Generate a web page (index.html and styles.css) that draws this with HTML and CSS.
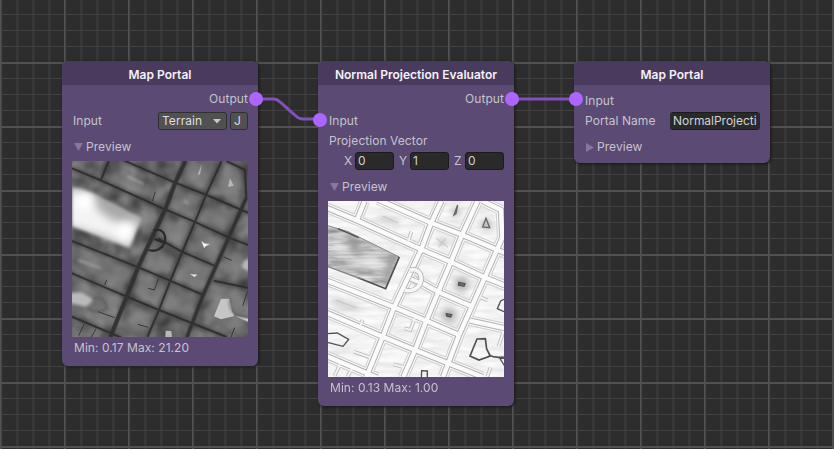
FILE: index.html
```html
<!DOCTYPE html>
<html lang="en">
<head>
<meta charset="utf-8">
<title>Graph</title>
<link rel="stylesheet" href="styles.css">
</head>
<body>
<main class="canvas">
  <svg class="wires" width="834" height="449">
    <path d="M256 99H274Q277 99 280 102L296 116Q299 119 303 119H320M512 99H576"/>
  </svg>

  <section class="node node-a">
    <h2 class="title">Map Portal</h2>
    <div class="row out">Output<i class="port port-out"></i></div>
    <div class="row field">
      <span class="grow">Input</span>
      <button class="select">Terrain<svg width="8" height="5"><path d="M0 0H8L4 4.6Z" fill="#c8c8c8"/></svg></button>
      <button class="jump">J</button>
    </div>
    <div class="fold"><svg width="9" height="8"><path d="M0 0H9L4.5 8Z" fill="#85789a"/></svg>Preview</div>
    <svg class="map" viewBox="0 0 528 528">
      <defs>
        <g id="roads" fill="none">
          <path id="avenue" d="M340 0L309 67L279 147L199 317L164 407L115 528"/>
          <path d="M449 0L404 97L367 187L329 277L294 362L259 452L226 528"/>
          <path d="M463 0L519 27L523 110L469 232L429 322L394 400L345 528"/>
          <path d="M-5 20L84 57L279 145L367 182L469 229L533 254"/>
          <path d="M150 -4L309 65L404 102L509 147L533 157"/>
          <path d="M-5 238L199 319L294 359L394 402"/>
          <path d="M-5 335L164 407L261 447L374 492L464 528"/>
          <path d="M-5 465L148 530"/>
          <path d="M258 232L329 272L434 317"/>
          <path d="M426 359L533 382"/>
          <path d="M110 0L86 59"/>
        </g>
        <g id="lanes" fill="none">
          <path d="M250 92L241 120M260 352L247 387L229 382M78 452L128 470M104 357L98 372M197 490L228 499M455 288L479 298M527 390L512 435M488 500L477 528M36 490L20 524M72 503L58 528"/>
        </g>
        <path id="loop" d="M245 208C270 200 282 219 279 240C274 263 250 274 230 267M248 234L276 245" fill="none"/>
        <filter id="b3"><feGaussianBlur stdDeviation="4"/></filter>
        <filter id="b1"><feGaussianBlur stdDeviation="1.7"/></filter>
        <filter id="b9" x="-.5" y="-.5" width="2" height="2"><feGaussianBlur stdDeviation="10"/></filter>
        <filter id="b14" x="-.5" y="-.5" width="2" height="2"><feGaussianBlur stdDeviation="13"/></filter>
        <filter id="cloud" x="0" y="0" width="1" height="1" color-interpolation-filters="sRGB"><feTurbulence type="fractalNoise" baseFrequency=".02" numOctaves="2" seed="4"/><feColorMatrix values="1 0 0 0 -.08  1 0 0 0 -.08  1 0 0 0 -.08  0 0 0 0 1"/></filter>
        <filter id="streak" x="0" y="0" width="1" height="1" color-interpolation-filters="sRGB"><feTurbulence type="fractalNoise" baseFrequency=".012 .06" numOctaves="3" seed="8"/><feColorMatrix values="1 0 0 0 .25  1 0 0 0 .25  1 0 0 0 .25  0 0 0 0 1"/></filter>
        <clipPath id="park"><path d="M0 74L60 92L214 168L173 263L0 197Z"/></clipPath>
      </defs>
      <rect width="528" height="528" fill="#646464"/>
      <rect width="528" height="528" filter="url(#cloud)" opacity=".4"/>
      <g filter="url(#b9)" fill="#858585" opacity=".6">
        <path d="M120 30L280 95L255 125L105 70ZM350 10L430 20L395 80L330 60ZM460 20L505 40L500 120L425 95ZM315 95L385 120L360 165L295 145ZM410 130L485 160L460 210L385 180ZM375 210L450 240L430 300L345 265ZM275 170L350 195L320 260L260 225ZM335 290L415 325L390 385L310 350ZM235 270L310 290L285 340L220 310ZM210 340L285 370L250 430L180 400ZM300 385L380 410L360 470L275 440ZM20 265L180 325L155 385L10 325ZM190 435L250 460L220 515L150 490ZM10 360L150 415L120 500L0 450ZM440 370L520 390L520 520L400 480ZM470 270L528 280V355L440 335Z"/>
      </g>
      <use href="#roads" stroke="#3a3a3a" stroke-width="17" opacity=".45" filter="url(#b3)"/>
      <use href="#roads" stroke="#2b2b2b" stroke-width="6" opacity=".85" filter="url(#b1)"/>
      <use href="#avenue" fill="none" stroke="#303030" stroke-width="13" opacity=".8" filter="url(#b1)"/>
      <path d="M523 110L469 232L429 322L394 400L345 528" fill="none" stroke="#303030" stroke-width="12" opacity=".65" filter="url(#b1)"/>
      <use href="#lanes" stroke="#363636" stroke-width="3"/>
      <use href="#loop" stroke="#2c2c2c" stroke-width="7" filter="url(#b1)"/>
      <g filter="url(#b3)">
        <path d="M0 78L60 96L210 170L171 258L0 195Z" fill="#a8a8a8"/>
        <g clip-path="url(#park)">
          <path filter="url(#b14)" d="M-30 85L60 92L80 150L130 182L198 180L178 262L90 225L-30 190Z" fill="#f4f4f4"/>
          <g filter="url(#b9)"><circle cx="38" cy="122" r="22" fill="#fff"/><circle cx="158" cy="210" r="22" fill="#fff"/></g>
        </g>
      </g>
      <g fill="#b9b9b9" filter="url(#b3)">
        <path d="M-6 396L28 394L64 415L45 438L-6 426Z"/>
        <path d="M532 290L516 300L508 318L532 334Z"/>
      </g>
      <path d="M447 414L472 413L480 450L487 465L447 475L426 466ZM490 464L528 472V482L500 470Z" fill="#c6c6c6" filter="url(#b1)"/>
      <path d="M389 242L399 248L412 250L401 255L397 260ZM356 340L366 341L374 341L368 347Z" fill="#fff" stroke="#ccc" stroke-width="2" filter="url(#b1)"/>
      <path d="M474 52L485 74L468 78ZM389 10L384 40L377 43ZM281 509L298 510L300 528H280Z" fill="#b8b8b8" filter="url(#b1)"/>
      <path d="M165 46L215 69M20 298L86 322M335 118L350 129" stroke="#b0b0b0" stroke-width="5" filter="url(#b3)"/>
      <path d="M62 415C78 402 105 417 104 445M45 436C58 455 82 455 100 445M475 413C468 445 490 470 528 468" fill="none" stroke="#4d4d4d" stroke-width="4" filter="url(#b3)"/>
    </svg>
    <p class="range">Min: 0.17 Max: 21.20</p>
  </section>

  <section class="node node-b">
    <h2 class="title">Normal Projection Evaluator</h2>
    <div class="row out">Output<i class="port port-out"></i></div>
    <div class="row field">Input<i class="port port-in port-low"></i></div>
    <div class="row vector-name">Projection Vector</div>
    <div class="vector">
      <span>X</span><span class="input">0</span><span>Y</span><span class="input">1</span><span>Z</span><span class="input">0</span>
    </div>
    <div class="fold"><svg width="9" height="8"><path d="M0 0H9L4.5 8Z" fill="#85789a"/></svg>Preview</div>
    <svg class="map" viewBox="0 0 528 528">
      <rect width="528" height="528" fill="#fbfbfb"/>
      <rect width="528" height="528" filter="url(#streak)" opacity=".13"/>
      <g filter="url(#b9)" fill="#b5b5b5">
        <circle cx="401" cy="249" r="23"/><circle cx="363" cy="342" r="22"/><circle cx="475" cy="70" r="16"/><circle cx="384" cy="32" r="12"/><path d="M155 42L220 68L210 76L145 52ZM15 290L95 318L90 328L10 305Z" opacity=".8"/><circle cx="342" cy="124" r="10"/>
      </g>
      <g filter="url(#b1)">
        <use href="#lanes" stroke="#b8b8b8" stroke-width="11"/>
        <use href="#roads" stroke="#cfcfcf" stroke-width="32"/>
        <use href="#roads" stroke="#fafafa" stroke-width="26"/>
        <use href="#roads" stroke="#b2b2b2" stroke-width="19"/>
        <use href="#lanes" stroke="#f5f5f5" stroke-width="6"/>
        <use href="#roads" stroke="#fbfbfb" stroke-width="13"/>
        <use href="#loop" stroke="#b4b4b4" stroke-width="16"/>
        <use href="#loop" stroke="#f6f6f6" stroke-width="11"/>
      </g>
      <g clip-path="url(#park)">
        <rect width="220" height="270" fill="#c4c4c4"/>
        <rect width="220" height="270" filter="url(#streak)" opacity=".55"/>
        <g filter="url(#b9)"><path d="M50 95L90 110L100 160L70 145ZM185 160L210 170L180 250L165 245Z" fill="#999"/><path d="M20 115L65 140L50 155L10 140ZM60 180L150 165L160 215L120 195Z" fill="#e6e6e6"/></g>
        <path d="M0 105H110M0 128H160M0 150H195M0 171H200M0 192H190M35 214H190M90 233H180" stroke="#999" stroke-width="2" opacity=".4"/>
      </g>
      <g fill="none" stroke="#505050" filter="url(#b1)">
        <path d="M0 74L60 92L214 168" stroke="#888" stroke-width="3"/><path d="M30 83L92 110" stroke-width="4"/><path d="M214 168L173 263L90 230" stroke-width="5"/><path d="M0 197L100 234" stroke="#888" stroke-width="4"/>
        <path d="M-2 398L28 396L62 415L45 436L-2 424" stroke-width="4"/>
        <path d="M447 414L472 413L476 444L487 465L453 477L426 465ZM482 462Q500 472 528 468" stroke-width="5"/>
        <path d="M530 294L518 300L508 323L530 333M530 472L515 471L530 495M280 530L281 509L298 510L298 530" stroke-width="4"/>
        <path d="M393 244L411 248L408 256L391 252ZM355 338L371 341L368 348L356 345Z" fill="#777" stroke-width="4"/>
        <path d="M474 52L485 80L464 78ZM389 12L384 38L378 42Z" stroke="#666" stroke-width="4"/>
        <path d="M325 112L360 139M332 139L353 112M165 46L210 66M25 298L85 320" stroke="#c4c4c4" stroke-width="3"/>
      </g>
    </svg>
    <p class="range">Min: 0.13 Max: 1.00</p>
  </section>

  <section class="node node-c">
    <h2 class="title">Map Portal</h2>
    <div class="row first">Input<i class="port port-in"></i></div>
    <div class="row name"><span class="grow">Portal Name</span><span class="input name-input">NormalProjection</span></div>
    <div class="fold"><svg width="8" height="9"><path d="M0 0V9L8 4.5Z" fill="#85789a"/></svg>Preview</div>
  </section>
</main>
</body>
</html>
```
FILE: styles.css
```css
* { box-sizing: border-box; }
body { margin: 0; overflow: hidden; }
.canvas {
  position: relative;
  width: 834px;
  height: 449px;
  color: #c6c3cc;
  font: 12px/16px Inter, sans-serif;
  letter-spacing: .06px;
  background-color: #2d2d2d;
  background-image:
    linear-gradient(#515151 2px, transparent 2px),
    linear-gradient(90deg, #515151 1px, #454545 1px, #454545 2px, transparent 2px),
    linear-gradient(#414141 1px, transparent 1px),
    linear-gradient(90deg, #3e3e3e 1px, #353535 1px, #353535 2px, transparent 2px);
  background-size: 64px 64px, 64px 64px, 16px 16px, 16px 16px;
  background-position: 0 62px, 0 0, 0 14px, 16.5px 0;
}
.wires { position: absolute; inset: 0; }
.wires path { fill: none; stroke: #8150bd; stroke-width: 3; }
.node {
  position: absolute;
  top: 61px;
  width: 196px;
  background: #5a4a74;
  border-radius: 6px;
  box-shadow: 1px 1px 3px #161616;
}
.node-a { left: 62px; height: 305px; }
.node-b { left: 318px; height: 345px; }
.node-c { left: 574px; height: 102px; }
.title {
  height: 24px;
  margin: 0;
  padding-top: 1px;
  border-radius: 6px 6px 0 0;
  background: #493b5d;
  color: #f4f2f6;
  font-size: 12px;
  line-height: 26px;
  font-weight: 600;
  letter-spacing: .02px;
  text-align: center;
}
.row { position: relative; display: flex; align-items: center; padding: 0 11px; white-space: nowrap; }
.out { height: 26px; padding-top: 2px; padding-right: 10px; justify-content: flex-end; }
.field { height: 20px; padding-right: 10px; }
.grow { flex: 1; }
.vector-name { height: 20px; }
.first { height: 30px; padding-top: 2px; }
.name { height: 20px; padding-right: 10px; margin-top: -4px; }
.port { position: absolute; width: 14px; height: 14px; border-radius: 50%; background: #ad65ff; }
.port-out { right: -5px; top: 7px; }
.port-in { left: -5px; top: 7px; }
.port-low { top: 2px; }
button {
  height: 18px;
  padding: 0;
  border: 1px solid #303030;
  border-radius: 3px;
  background: #515151;
  color: #dedede;
  font: inherit;
  letter-spacing: inherit;
}
.select { display: flex; align-items: center; justify-content: space-between; width: 69px; padding: 0 5px 0 3px; }
.jump { width: 18px; margin-left: 3px; padding-right: 3px; }
.fold { display: flex; align-items: center; gap: 3px; height: 16px; margin: 8px 0 6px 12px; }
.map { display: block; width: 176px; height: 176px; margin-left: 10px; }
.range { margin: 3px 0 0 12px; }
.vector { display: flex; align-items: center; height: 20px; padding: 0 10px 0 26px; }
.vector span:not(.input) { width: 11px; flex: none; }
.vector .input + span { margin-left: 5px; }
.input {
  width: 39px;
  height: 18px;
  padding-left: 2px;
  overflow: hidden;
  border: 1px solid #1b1b1b;
  border-radius: 3px;
  background: #2a2a2a;
  color: #d2d2d2;
  line-height: 16px;
}
.name-input { width: 90px; padding: 0; border-width: 1px 3px; border-color: #1b1b1b #2a2a2a; letter-spacing: -.02px; }
```
